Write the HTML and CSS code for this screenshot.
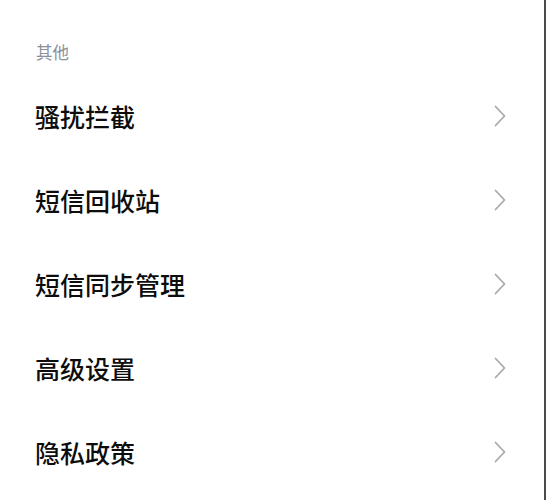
FILE: index.html
```html
<!DOCTYPE html>
<html lang="zh-CN">
<head>
<meta charset="utf-8">
<link rel="stylesheet" href="styles.css">
</head>
<body>
<div class="page">
  <div class="section-title">其他</div>
  <ul class="list">
    <li class="row"><span class="label">骚扰拦截</span><svg class="chev" viewBox="0 0 12 22"><path d="M1.5 1.5 L10.5 11 L1.5 20.5"/></svg></li>
    <li class="row"><span class="label">短信回收站</span><svg class="chev" viewBox="0 0 12 22"><path d="M1.5 1.5 L10.5 11 L1.5 20.5"/></svg></li>
    <li class="row"><span class="label">短信同步管理</span><svg class="chev" viewBox="0 0 12 22"><path d="M1.5 1.5 L10.5 11 L1.5 20.5"/></svg></li>
    <li class="row"><span class="label">高级设置</span><svg class="chev" viewBox="0 0 12 22"><path d="M1.5 1.5 L10.5 11 L1.5 20.5"/></svg></li>
    <li class="row"><span class="label">隐私政策</span><svg class="chev" viewBox="0 0 12 22"><path d="M1.5 1.5 L10.5 11 L1.5 20.5"/></svg></li>
  </ul>
</div>
</body>
</html>
```
FILE: styles.css
```css
html, body {
  margin: 0;
  padding: 0;
  background: #ffffff;
}
body {
  font-family: "Noto Sans CJK SC", "Noto Sans", sans-serif;
}
.page {
  width: 544px;
  height: 500px;
  border-right: 2px solid #4a4a4a;
  overflow: hidden;
}
.section-title {
  height: 74px;
  box-sizing: border-box;
  padding-top: 40px;
  padding-left: 36px;
  font-size: 16.5px;
  line-height: 24px;
  color: #8a909a;
}
.list {
  list-style: none;
  margin: 0;
  padding: 0;
}
.row {
  height: 84px;
  display: flex;
  align-items: center;
  justify-content: space-between;
  padding: 0 38px 0 35px;
}
.label {
  font-size: 25px;
  font-weight: 500;
  color: #0d0d0d;
  line-height: 1;
}
.chev {
  width: 12px;
  height: 22px;
  fill: none;
  stroke: #a9a9a9;
  stroke-width: 1.8;
  stroke-linecap: round;
  stroke-linejoin: round;
}
```
